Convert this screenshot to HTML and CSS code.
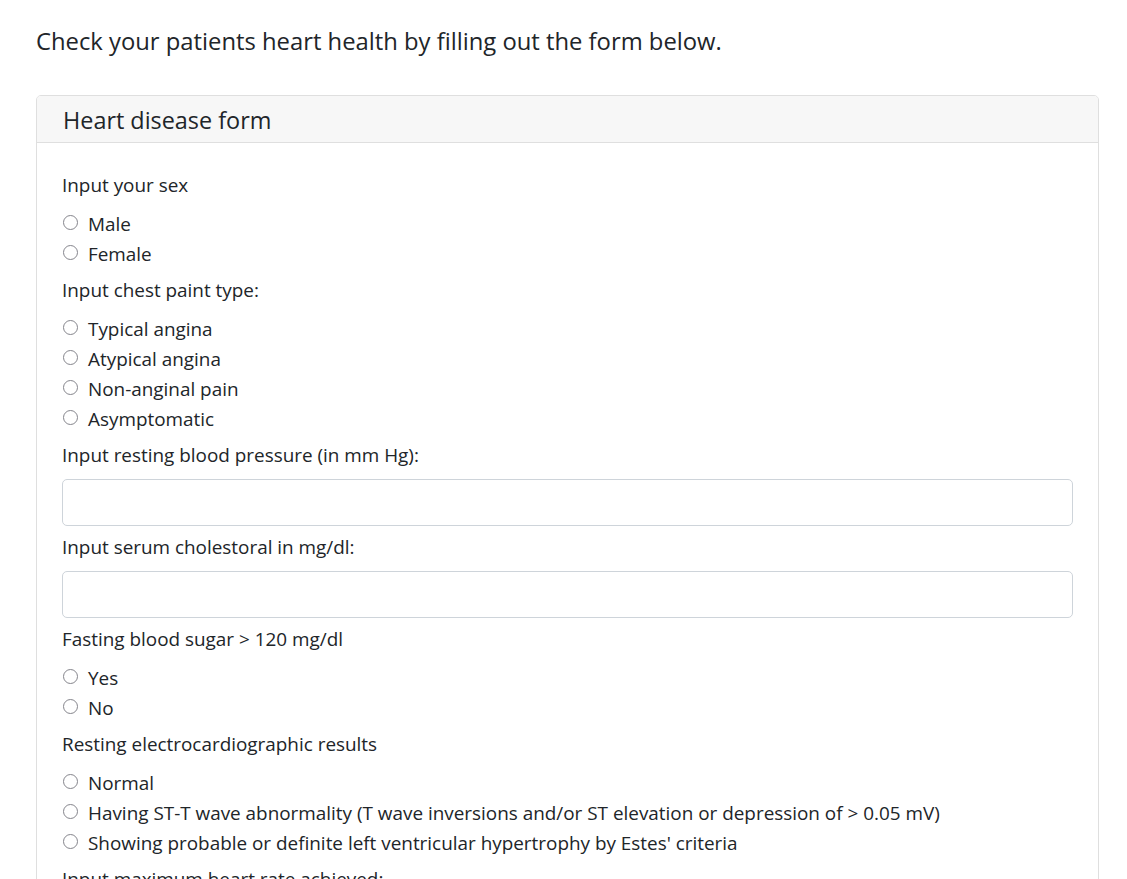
FILE: index.html
```html
<!DOCTYPE html>
<html lang="en">
<head>
<meta charset="utf-8">
<title>Heart disease form</title>
<link rel="stylesheet" href="styles.css">
</head>
<body>
<div class="page">
  <p class="intro">Check your patients heart health by filling out the form below.</p>
  <div class="card">
    <div class="card-header">Heart disease form</div>
    <form class="card-body">
      <div class="group">
        <div class="label">Input your sex</div>
        <label class="check"><input type="radio" name="sex"><span>Male</span></label>
        <label class="check"><input type="radio" name="sex"><span>Female</span></label>
      </div>
      <div class="group">
        <div class="label">Input chest paint type:</div>
        <label class="check"><input type="radio" name="cp"><span>Typical angina</span></label>
        <label class="check"><input type="radio" name="cp"><span>Atypical angina</span></label>
        <label class="check"><input type="radio" name="cp"><span>Non-anginal pain</span></label>
        <label class="check"><input type="radio" name="cp"><span>Asymptomatic</span></label>
      </div>
      <div class="group">
        <label class="label" for="bp">Input resting blood pressure (in mm Hg):</label>
        <input class="control" id="bp" type="text">
      </div>
      <div class="group">
        <label class="label" for="chol">Input serum cholestoral in mg/dl:</label>
        <input class="control" id="chol" type="text">
      </div>
      <div class="group">
        <div class="label">Fasting blood sugar &gt; 120 mg/dl</div>
        <label class="check"><input type="radio" name="fbs"><span>Yes</span></label>
        <label class="check"><input type="radio" name="fbs"><span>No</span></label>
      </div>
      <div class="group">
        <div class="label">Resting electrocardiographic results</div>
        <label class="check"><input type="radio" name="ecg"><span>Normal</span></label>
        <label class="check"><input type="radio" name="ecg"><span>Having ST-T wave abnormality (T wave inversions and/or ST elevation or depression of &gt; 0.05 mV)</span></label>
        <label class="check"><input type="radio" name="ecg"><span>Showing probable or definite left ventricular hypertrophy by Estes' criteria</span></label>
      </div>
      <div class="group">
        <label class="label" for="hr">Input maximum heart rate achieved:</label>
        <input class="control" id="hr" type="text">
      </div>
    </form>
  </div>
</div>
</body>
</html>
```
FILE: styles.css
```css
html, body {
  margin: 0;
  padding: 0;
  background: #fff;
}
body {
  font-family: "Open Sans", "Noto Sans", sans-serif;
  color: #212529;
  font-size: 18.9px;
  line-height: 30px;
}
.page {
  padding: 24px 28px 40px 36px;
}
.intro {
  margin: 0 0 37px 0;
  font-size: 23.8px;
  line-height: 34px;
}
.card {
  border: 1px solid #dfdfdf;
  border-radius: 5px;
  overflow: hidden;
}
.card-header {
  background: #f7f7f7;
  border-bottom: 1px solid #dfdfdf;
  padding: 10px 25px 8px 26px;
  font-size: 23.4px;
  line-height: 28px;
}
.card-body {
  display: flex;
  flex-direction: column;
  gap: 6px;
  padding: 27px 25px 25px 25px;
}
.group {
  display: flex;
  flex-direction: column;
}
.label {
  display: block;
  margin-bottom: 9px;
}
.check {
  display: flex;
  align-items: center;
  gap: 10px;
  height: 30px;
}
.check input {
  appearance: none;
  -webkit-appearance: none;
  box-sizing: border-box;
  margin: -4px 0 0 1px;
  width: 15px;
  height: 15px;
  border: 1.6px solid #85858c;
  border-radius: 50%;
  background: #fff;
  flex: none;
}
.control {
  display: block;
  box-sizing: border-box;
  width: 100%;
  height: 47px;
  margin: 0;
  border: 1px solid #ced4da;
  border-radius: 5px;
  padding: 8px 15px;
  font: inherit;
  color: #495057;
  background: #fff;
}
```
